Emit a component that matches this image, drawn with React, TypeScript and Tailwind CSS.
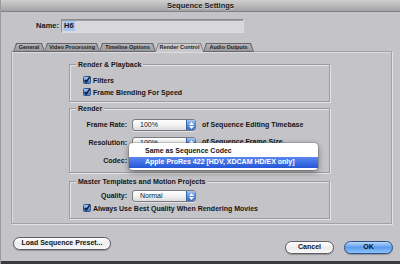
import React from "react";

function Check() {
  return (
    <svg width="8" height="8" viewBox="0 0 8 8" className="shrink-0">
      <defs>
        <linearGradient id="cbg" x1="0" y1="0" x2="0" y2="1">
          <stop offset="0" stopColor="#a9cdf7" />
          <stop offset="1" stopColor="#2f6fd0" />
        </linearGradient>
      </defs>
      <rect x="0.5" y="0.5" width="7" height="7" rx="1" fill="url(#cbg)" stroke="#34558c" />
      <path d="M1.6 4 L3.2 6 L7 0.6" fill="none" stroke="#101820" strokeWidth="1.4" />
    </svg>
  );
}

function Select({ value }: { value: string }) {
  return (
    <div className="flex h-[12px] w-[64px] items-stretch overflow-hidden rounded-[3px] border border-[#7a7a7e] bg-gradient-to-b from-white via-[#f2f2f2] to-[#dcdcdc] shadow-[0_1px_0_rgba(255,255,255,0.5)]">
      <span className="flex-1 pl-[7px] text-[7px] leading-[10px]">{value}</span>
      <span className="flex w-[9px] flex-col items-center justify-center gap-[1px] border-l border-[#3e64a8] bg-gradient-to-b from-[#a7c8f4] via-[#5b8fe0] to-[#3a6fcc]">
        <svg width="5" height="3" viewBox="0 0 5 3">
          <path d="M0 3 L2.5 0 L5 3 Z" fill="#fff" />
        </svg>
        <svg width="5" height="3" viewBox="0 0 5 3">
          <path d="M0 0 L2.5 3 L5 0 Z" fill="#fff" />
        </svg>
      </span>
    </div>
  );
}

function Tab({ label, w, active }: { label: string; w: string; active?: boolean }) {
  return (
    <div
      className={`${w} -mr-[1px] h-[9px] [clip-path:polygon(0_100%,3px_0,calc(100%-3px)_0,100%_100%)] ${
        active ? "bg-[#8a8a8e] pb-0" : "bg-[#66666a] pb-[1px]"
      } px-[1px] pt-[1px]`}
    >
      <div
        className={`flex h-full items-center justify-center text-[5.5px] font-bold leading-none text-[#222] [clip-path:polygon(0_100%,3px_0,calc(100%-3px)_0,100%_100%)] ${
          active ? "bg-[#c9c9cd]" : "bg-gradient-to-b from-[#b4b4b8] to-[#9a9a9e]"
        }`}
      >
        {label}
      </div>
    </div>
  );
}

function Group({ title, h, children }: { title: string; h: string; children: React.ReactNode }) {
  return (
    <div className={`relative ${h} w-[261px] border border-[#9c9ca0] shadow-[inset_1px_1px_0_#e4e4e6,1px_1px_0_#e4e4e6]`}>
      <div className="-mt-[5px] ml-[6px] flex h-[9px]">
        <span className="bg-[#c4c4c8] px-[2px] text-[7px] font-bold leading-[9px] text-[#151515]">{title}</span>
      </div>
      {children}
    </div>
  );
}

function Label({ children }: { children: React.ReactNode }) {
  return <span className="w-[57px] text-right text-[7px] font-bold leading-[12px] text-[#151515]">{children}</span>;
}

export default function App() {
  return (
    <div className="relative flex h-[264px] w-[400px] flex-col overflow-hidden border-l border-[#9a9a9e] bg-[#c4c4c8] font-['Liberation_Sans',Arial,sans-serif] text-[#151515]">
      {/* Title bar */}
      <div className="flex h-[12px] shrink-0 items-center justify-center border-b border-[#808084] bg-gradient-to-b from-[#d0d0d0] via-[#b8b8ba] to-[#a4a4a6]">
        <span className="text-[7.5px] font-bold leading-none text-[#1a1a1a] [text-shadow:0_1px_0_rgba(255,255,255,0.4)]">
          Sequence Settings
        </span>
      </div>

      {/* Name row */}
      <div className="mt-[7px] flex h-[14px] items-center">
        <span className="w-[58px] text-right text-[7.5px] font-bold">Name:</span>
        <div className="ml-[2px] flex h-[14px] w-[183px] items-center border border-[#8a8a8e] border-b-[#dcdcde] border-r-[#dcdcde] bg-[#d8d8da] shadow-[inset_0_1px_0_#a0a0a4]">
          <span className="ml-[1px] bg-[#a8c6f2] px-[1px] text-[7.5px] font-bold leading-[10px]">H6</span>
        </div>
      </div>

      {/* Tabs */}
      <div className="relative z-10 mt-[10px] flex h-[9px] pl-[12px]">
        <Tab label="General" w="w-[32px]" />
        <Tab label="Video Processing" w="w-[56px]" />
        <Tab label="Timeline Options" w="w-[57px]" />
        <Tab label="Render Control" w="w-[49px]" active />
        <Tab label="Audio Outputs" w="w-[51px]" />
      </div>

      {/* Panel */}
      <div className="-mt-[1px] ml-[10px] flex h-[173px] w-[381px] flex-col border border-[#a2a2a6] pl-[57px] pt-[12px] shadow-[inset_1px_1px_0_#dcdcde,1px_1px_0_#e2e2e4]">
        <Group title="Render & Playback" h="h-[38px]">
          <div className="mt-[6px] flex flex-col gap-[2px] pl-[13px]">
            <div className="flex h-[10px] items-center gap-[2px]">
              <Check />
              <span className="text-[7px] font-bold leading-none">Filters</span>
            </div>
            <div className="flex h-[10px] items-center gap-[2px]">
              <Check />
              <span className="text-[7px] font-bold leading-none">Frame Blending For Speed</span>
            </div>
          </div>
        </Group>

        <div className="mt-[6px]">
          <Group title="Render" h="h-[65px]">
            <div className="mt-[6px] flex flex-col gap-[6px]">
              <div className="flex h-[12px] items-center">
                <Label>Frame Rate:</Label>
                <span className="ml-[5px]">
                  <Select value="100%" />
                </span>
                <span className="ml-[6px] text-[7px] font-bold">of Sequence Editing Timebase</span>
              </div>
              <div className="flex h-[12px] items-center">
                <Label>Resolution:</Label>
                <span className="ml-[5px]">
                  <Select value="100%" />
                </span>
                <span className="ml-[6px] -translate-y-[1px] text-[7px] font-bold">of Sequence Frame Size</span>
              </div>
              <div className="flex h-[12px] items-center">
                <Label>Codec:</Label>
              </div>
            </div>
            {/* Popup menu */}
            <div className="absolute left-[59px] top-[34px] z-20 flex h-[27px] w-[189px] flex-col rounded-[4px] bg-white pt-[3px] shadow-[0_2px_6px_rgba(0,0,0,0.45),0_0_0_1px_rgba(0,0,0,0.12)]">
              <div className="flex h-[11px] items-center pl-[16px] text-[7px] font-bold text-[#151515]">Same as Sequence Codec</div>
              <div className="flex h-[11px] items-center bg-gradient-to-b from-[#5a86ee] to-[#2457d8] pl-[16px] text-[7px] font-bold text-white">
                Apple ProRes 422 [HDV, XDCAM HD/EX only]
              </div>
            </div>
          </Group>
        </div>

        <div className="mt-[8px]">
          <Group title="Master Templates and Motion Projects" h="h-[38px]">
            <div className="mt-[4px] flex flex-col gap-[1px]">
              <div className="flex h-[12px] items-center">
                <Label>Quality:</Label>
                <span className="ml-[5px]">
                  <Select value="Normal" />
                </span>
              </div>
              <div className="flex h-[10px] items-center gap-[2px] pl-[13px]">
                <Check />
                <span className="text-[7px] font-bold leading-none">Always Use Best Quality When Rendering Movies</span>
              </div>
            </div>
          </Group>
        </div>
      </div>

      {/* Footer buttons */}
      <div className="mt-[13px] flex items-start pl-[12px] pr-[7px]">
        <button className="flex h-[13px] w-[98px] items-center justify-center rounded-full border border-[#5e5e62] bg-gradient-to-b from-white via-[#ececec] to-[#f8f8f8] text-[7px] font-bold text-[#151515] shadow-[0_1px_1px_rgba(0,0,0,0.25)]">
          Load Sequence Preset...
        </button>
        <div className="flex-1" />
        <div className="mt-[4px] flex gap-[10px]">
          <button className="flex h-[13px] w-[49px] items-center justify-center rounded-full border border-[#5e5e62] bg-gradient-to-b from-white via-[#ececec] to-[#f8f8f8] text-[7px] font-bold text-[#151515] shadow-[0_1px_1px_rgba(0,0,0,0.25)]">
            Cancel
          </button>
          <button className="flex h-[13px] w-[49px] items-center justify-center rounded-full border border-[#2f4f8a] bg-gradient-to-b from-[#b7d8fb] via-[#5c9ced] to-[#8cc4fa] text-[7px] font-bold text-[#101010] shadow-[0_1px_1px_rgba(0,0,0,0.25)]">
            OK
          </button>
        </div>
      </div>

      <div className="mt-auto h-[3px] bg-[#3a3a3c]" />
    </div>
  );
}
